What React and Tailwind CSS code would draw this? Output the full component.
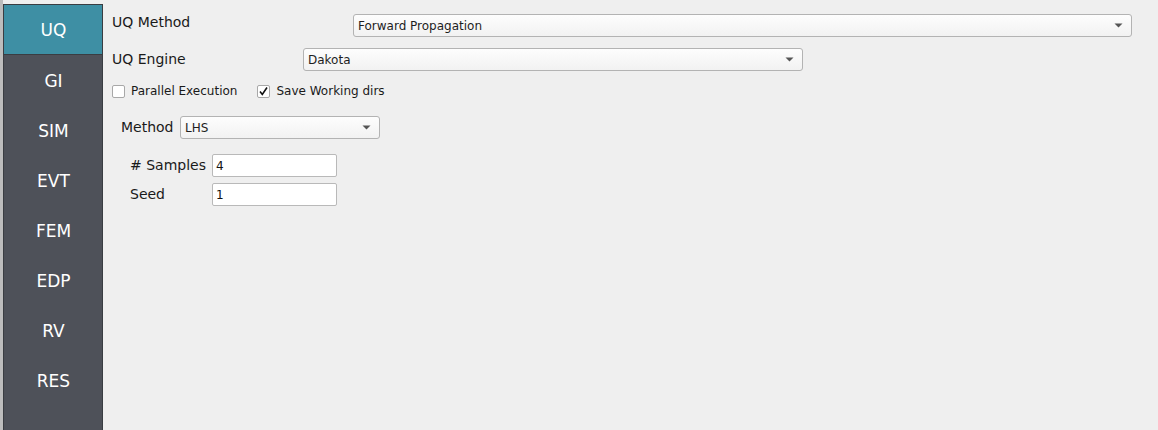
import React from "react";

const font = { fontFamily: '"DejaVu Sans", sans-serif' };

function Arrow() {
  return (
    <svg width="9" height="5" viewBox="0 0 9 5" className="shrink-0">
      <path d="M0.5 0.5 L8.5 0.5 L4.5 4.5 Z" fill="#555" />
    </svg>
  );
}

function Combo({ text, className }) {
  return (
    <div
      className={
        "flex items-center justify-between h-[23px] rounded-[3px] border border-[#b3b3b3] bg-gradient-to-b from-[#fdfdfd] to-[#f2f2f2] pl-[4px] pr-[8px] text-[12px] text-[#1e1e1e] " +
        (className || "")
      }
    >
      <span>{text}</span>
      <Arrow />
    </div>
  );
}

function Input({ value }) {
  return (
    <div className="flex items-center h-[23px] w-[125px] rounded-[2px] border border-[#b9b9b9] bg-white pl-[3px] text-[12px] text-[#111]">
      {value}
    </div>
  );
}

function Check({ checked }) {
  return (
    <div className="w-[13px] h-[13px] rounded-[2px] border border-[#a8a8a8] bg-white flex items-center justify-center">
      {checked && (
        <svg width="11" height="11" viewBox="0 0 11 11">
          <path d="M2 5.5 L4.3 8.5 L9 1.5" fill="none" stroke="#111" strokeWidth="1.6" />
        </svg>
      )}
    </div>
  );
}

const items = ["UQ", "GI", "SIM", "EVT", "FEM", "EDP", "RV", "RES"];

export default function App() {
  return (
    <div className="flex w-[1158px] h-[430px] bg-[#efefef] overflow-hidden" style={font}>
      <div className="w-[3px] h-full bg-[#bdbdbd] shrink-0" />
      <div className="flex flex-col w-[100px] shrink-0 mt-[4px]">
        <div className="flex flex-col flex-1 border-l border-t border-r border-[#3a3d42] bg-[#4e5159]">
          {items.map((it, i) => (
            <div
              key={it}
              className={
                "h-[50px] flex items-center justify-center pt-[3px] pl-[1px] text-[17px] text-white " +
                (i === 0 ? "bg-[#3e8fa4] border-b border-[#3a3d42]" : "")
              }
            >
              {it}
            </div>
          ))}
        </div>
      </div>
      <div className="flex-1 flex flex-col pl-[9px] pr-[26px] text-[#1a1a1a]">
        <div className="flex items-start mt-[14px] h-[23px]">
          <div className="w-[241px] shrink-0 text-[14px] leading-[17px]">UQ Method</div>
          <Combo text="Forward Propagation" className="flex-1" />
        </div>
        <div className="flex items-center mt-[11px] h-[23px]">
          <div className="w-[191px] shrink-0 text-[14px]">UQ Engine</div>
          <Combo text="Dakota" className="w-[500px]" />
        </div>
        <div className="flex items-center mt-[11px] h-[18px] text-[12px]">
          <Check />
          <span className="ml-[6px]">Parallel Execution</span>
          <div className="ml-[20px]">
            <Check checked />
          </div>
          <span className="ml-[6px]">Save Working dirs</span>
        </div>
        <div className="flex items-center mt-[16px] h-[23px] pl-[9px]">
          <div className="w-[59px] shrink-0 text-[14px]">Method</div>
          <Combo text="LHS" className="w-[200px]" />
        </div>
        <div className="flex items-center mt-[15px] h-[23px] pl-[18px]">
          <div className="w-[82px] shrink-0 text-[14px]"># Samples</div>
          <Input value="4" />
        </div>
        <div className="flex items-center mt-[6px] h-[23px] pl-[18px]">
          <div className="w-[82px] shrink-0 text-[14px]">Seed</div>
          <Input value="1" />
        </div>
      </div>
    </div>
  );
}
